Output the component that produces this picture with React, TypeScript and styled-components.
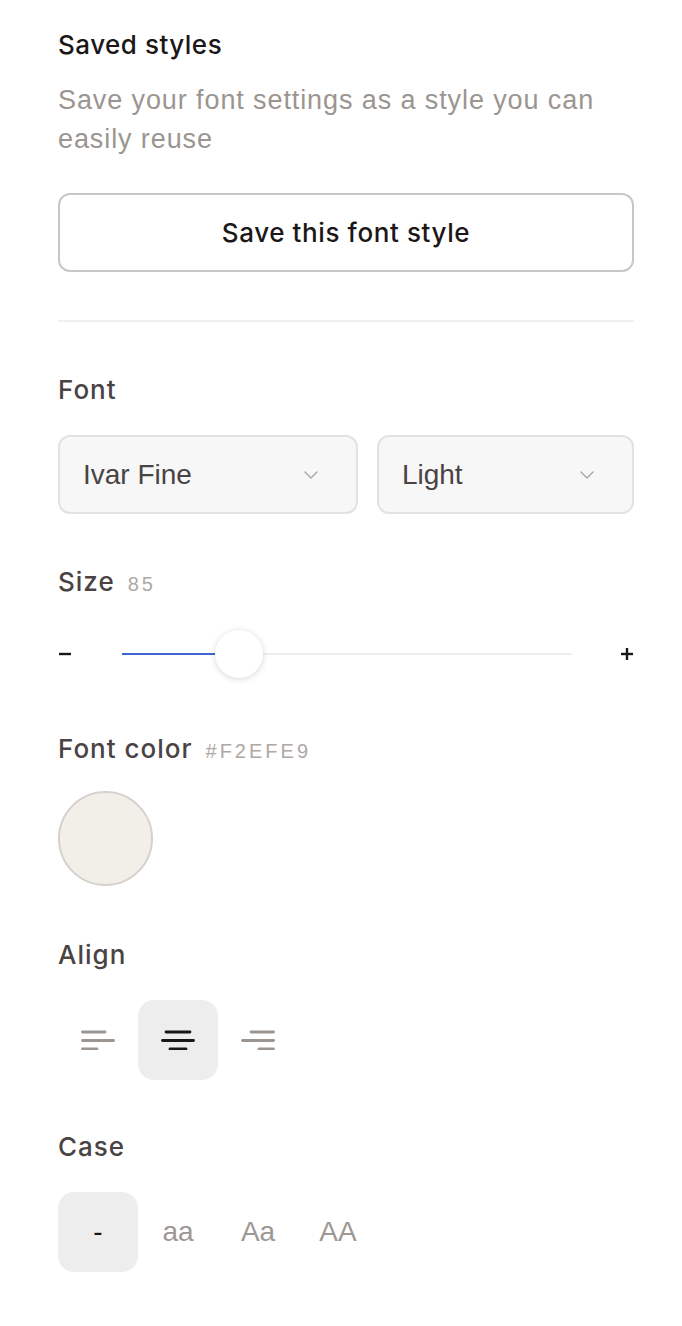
import React from 'react'
import styled, { createGlobalStyle } from 'styled-components'

const GlobalStyle = createGlobalStyle`
  body {
    margin: 0;
    background: #ffffff;
    font-family: 'Liberation Sans', Arial, sans-serif;
  }
`

const Panel = styled.div`
  width: 576px;
  padding: 29px 48px 60px 58px;
  display: flex;
  flex-direction: column;
`
const Title = styled.h2`
  margin: 0;
  font-family: Inter, 'Liberation Sans', sans-serif;
  font-size: 26px;
  font-weight: 500;
  line-height: 32px;
  color: #1c1717;
  letter-spacing: 0.5px;
`
const Description = styled.p`
  margin: 20px 0 0;
  font-size: 27px;
  line-height: 39px;
  letter-spacing: 0.9px;
  color: #9b9591;
`
const OutlineButton = styled.button`
  margin-top: 34px;
  height: 79px;
  width: 100%;
  border: 2px solid #c9c7c5;
  border-radius: 12px;
  background: #fff;
  font-family: Inter, 'Liberation Sans', sans-serif;
  font-size: 26px;
  font-weight: 500;
  letter-spacing: 0.6px;
  color: #1c1717;
  cursor: pointer;
`
const Divider = styled.hr`
  margin: 48px 0 0;
  border: none;
  height: 2px;
  background: #f0efee;
`
const Label = styled.div<{ $mt?: number }>`
  margin-top: ${(p) => p.$mt ?? 52}px;
  display: flex;
  align-items: baseline;
  gap: 13px;
  font-family: Inter, 'Liberation Sans', sans-serif;
  font-size: 26px;
  font-weight: 500;
  line-height: 32px;
  letter-spacing: 1px;
  color: #4a4343;
`
const Meta = styled.span`
  font-family: 'Liberation Sans', sans-serif;
  font-size: 20px;
  font-weight: 400;
  letter-spacing: 3px;
  color: #aea8a5;
`
const SelectRow = styled.div`
  margin-top: 29px;
  display: flex;
  gap: 19px;
`
const Select = styled.div<{ $w: number }>`
  box-sizing: border-box;
  width: ${(p) => p.$w}px;
  height: 79px;
  padding: 0 38px 0 23px;
  display: flex;
  align-items: center;
  justify-content: space-between;
  background: #f7f7f7;
  border: 2px solid #e3e2e2;
  border-radius: 12px;
  font-size: 28px;
  color: #4a4343;
`
const SliderRow = styled.div`
  margin-top: 30px;
  height: 48px;
  display: flex;
  align-items: center;
`
const Step = styled.span`
  width: 64px;
  display: flex;
  align-items: center;
`
const Track = styled.div`
  position: relative;
  flex: 1;
  height: 2px;
  background: #eeeeee;
  margin-right: 48px;
`
const Fill = styled.div`
  position: absolute;
  left: 0;
  top: 0;
  height: 2px;
  background: #3d66d4;
`
const Thumb = styled.div`
  position: absolute;
  top: -23px;
  width: 48px;
  height: 48px;
  margin-left: -24px;
  border-radius: 50%;
  background: #fff;
  box-shadow: 0 1px 6px rgba(0, 0, 0, 0.16);
`
const Swatch = styled.div<{ $color: string }>`
  margin-top: 24px;
  box-sizing: border-box;
  width: 95px;
  height: 95px;
  border-radius: 50%;
  background: ${(p) => p.$color};
  border: 2px solid #d6d1ce;
`
const ToggleRow = styled.div`
  margin-top: 29px;
  display: flex;
`
const Toggle = styled.button<{ $active?: boolean }>`
  width: 80px;
  height: 80px;
  border: none;
  border-radius: 16px;
  background: ${(p) => (p.$active ? '#ededed' : 'transparent')};
  color: ${(p) => (p.$active ? '#1c1717' : '#9e9895')};
  display: flex;
  align-items: center;
  justify-content: center;
  font-family: 'Liberation Sans', sans-serif;
  font-size: 28px;
  padding: 0;
  cursor: pointer;
`

const Chevron = () => (
  <svg width="14" height="8" viewBox="0 0 14 8" fill="none">
    <path d="M1 1l6 6 6-6" stroke="#a9a3a1" strokeWidth="1.4" strokeLinecap="round" strokeLinejoin="round" />
  </svg>
)

const AlignIcon: React.FC<{ lines: [number, number][]; color: string }> = ({ lines, color }) => (
  <svg width="34" height="20" viewBox="0 0 34 20" fill="none">
    {lines.map(([a, b], i) => (
      <line key={i} x1={a} x2={b} y1={2 + i * 8.5} y2={2 + i * 8.5} stroke={color} strokeWidth="2.8" strokeLinecap="round" />
    ))}
  </svg>
)

const aligns: { lines: [number, number][]; active?: boolean }[] = [
  { lines: [[1.5, 24], [1.5, 32.5], [1.5, 16]] },
  { lines: [[5, 29], [1.5, 32.5], [9, 25]], active: true },
  { lines: [[10, 32.5], [1.5, 32.5], [18, 32.5]] },
]

const cases = ['-', 'aa', 'Aa', 'AA']

export default function App() {
  const size = 85
  const pct = 26
  return (
    <>
      <GlobalStyle />
      <Panel>
        <Title>Saved styles</Title>
        <Description>Save your font settings as a style you can easily reuse</Description>
        <OutlineButton>Save this font style</OutlineButton>
        <Divider />

        <Label>Font</Label>
        <SelectRow>
          <Select $w={301}>
            Ivar Fine
            <Chevron />
          </Select>
          <Select $w={258}>
            Light
            <Chevron />
          </Select>
        </SelectRow>

        <Label>
          Size <Meta>{size}</Meta>
        </Label>
        <SliderRow>
          <Step>
            <svg width="14" height="14" viewBox="0 0 14 14">
              <line x1="1" y1="7" x2="13" y2="7" stroke="#1c1717" strokeWidth="2.4" />
            </svg>
          </Step>
          <Track>
            <Fill style={{ width: `${pct}%` }} />
            <Thumb style={{ left: `${pct}%` }} />
          </Track>
          <svg width="14" height="14" viewBox="0 0 14 14">
            <line x1="1" y1="7" x2="13" y2="7" stroke="#1c1717" strokeWidth="2.4" />
            <line x1="7" y1="1" x2="7" y2="13" stroke="#1c1717" strokeWidth="2.4" />
          </svg>
        </SliderRow>

        <Label $mt={55}>
          Font color <Meta>#F2EFE9</Meta>
        </Label>
        <Swatch $color="#f2efe9" />

        <Label $mt={53}>Align</Label>
        <ToggleRow>
          {aligns.map((a, i) => (
            <Toggle key={i} $active={a.active}>
              <AlignIcon lines={a.lines} color={a.active ? '#1c1717' : '#9b9591'} />
            </Toggle>
          ))}
        </ToggleRow>

        <Label $mt={51}>Case</Label>
        <ToggleRow>
          {cases.map((c, i) => (
            <Toggle key={c} $active={i === 0}>
              {c}
            </Toggle>
          ))}
        </ToggleRow>
      </Panel>
    </>
  )
}
